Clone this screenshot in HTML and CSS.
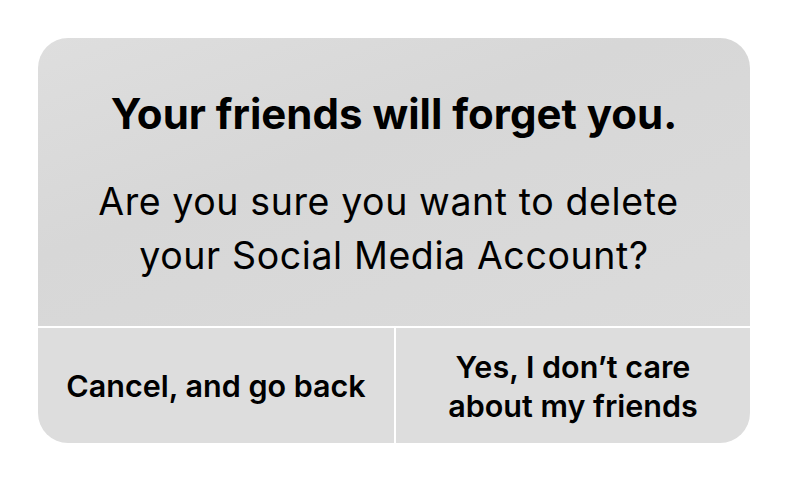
FILE: index.html
```html
<!DOCTYPE html>
<html>
<head>
<meta charset="utf-8">
<link rel="stylesheet" href="styles.css">
</head>
<body>
<div class="page">
  <div class="dialog">
    <div class="content">
      <h1 class="title">Your friends will forget you.</h1>
      <p class="message">Are you sure you want to delete&nbsp;<br>your Social Media Account?</p>
    </div>
    <div class="actions">
      <button class="action">Cancel, and go back</button>
      <button class="action">Yes, I don’t care<br>about my friends</button>
    </div>
  </div>
</div>
</body>
</html>
```
FILE: styles.css
```css
html, body {
  margin: 0;
  background: #ffffff;
}
.page {
  padding: 38px 36px 0 38px;
  font-family: Inter, "Noto Sans", sans-serif;
  color: #000;
}
.dialog {
  width: 712px;
  height: 405px;
  border-radius: 30px;
  overflow: hidden;
  background: #ffffff;
  display: flex;
  flex-direction: column;
  gap: 2px;
}
.content {
  height: 288px;
  background: linear-gradient(160deg, #dedede 0%, #d7d7d7 40%, #dbdbdb 100%);
  display: flex;
  flex-direction: column;
  align-items: center;
  text-align: center;
}
.title {
  margin: 52px 0 0 0;
  font-size: 42px;
  font-weight: 700;
  line-height: 48px;
  letter-spacing: 0;
}
.message {
  margin: 37px 0 0 0;
  font-size: 37.5px;
  font-weight: 400;
  line-height: 54px;
  letter-spacing: 0.6px;
}
.actions {
  flex: 1;
  display: grid;
  grid-template-columns: 356px 1fr;
  gap: 2px;
}
.action {
  border: 0;
  margin: 0;
  padding: 0;
  background: #dddddd;
  font-family: Inter, "Noto Sans", sans-serif;
  font-size: 30.5px;
  font-weight: 600;
  line-height: 39px;
  color: #000;
  text-align: center;
}
```
